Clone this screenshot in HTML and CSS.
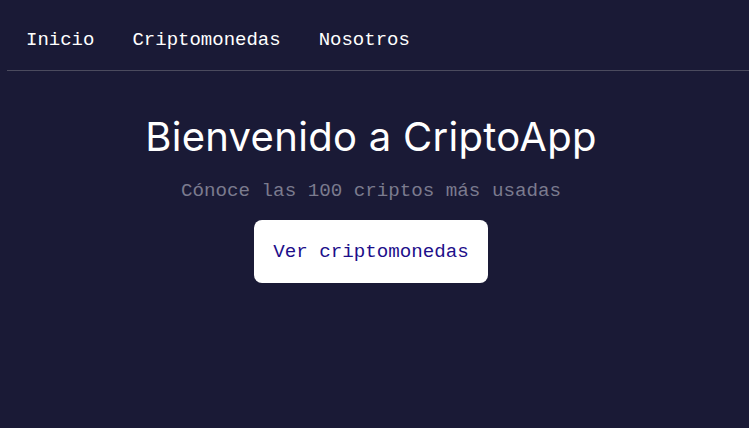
FILE: index.html
```html
<!DOCTYPE html>
<html lang="es">
<head>
<meta charset="utf-8">
<title>CriptoApp</title>
<link rel="stylesheet" href="styles.css">
</head>
<body>
<header class="header">
  <nav class="nav">
    <a class="nav-link" href="#">Inicio</a>
    <a class="nav-link" href="#">Criptomonedas</a>
    <a class="nav-link" href="#">Nosotros</a>
  </nav>
</header>
<main class="hero">
  <h1 class="hero-title">Bienvenido a CriptoApp</h1>
  <p class="hero-sub">Cónoce las 100 criptos más usadas</p>
  <a class="hero-btn" href="#">Ver criptomonedas</a>
</main>
</body>
</html>
```
FILE: styles.css
```css
html, body {
  margin: 0;
  padding: 0;
  background: #1a1a36;
  height: 100%;
}
body {
  font-family: "Liberation Mono", "DejaVu Sans Mono", monospace;
  color: #ffffff;
}
.header {
  margin-left: 7px;
  border-bottom: 1px solid #4b4b5e;
}
.nav {
  display: flex;
  gap: 38px;
  padding: 29px 0 19px 19px;
}
.nav-link {
  color: #ffffff;
  text-decoration: none;
  font-size: 19px;
  line-height: 22px;
}
.hero {
  display: flex;
  flex-direction: column;
  align-items: center;
  padding-right: 7px;
}
.hero-title {
  font-family: "Inter", "Open Sans", sans-serif;
  font-weight: 400;
  font-size: 40px;
  letter-spacing: 0.3px;
  line-height: 46px;
  margin: 43px 0 0;
}
.hero-sub {
  color: #7b7b8e;
  font-size: 19.2px;
  line-height: 22px;
  margin: 20px 0 0;
}
.hero-btn {
  margin-top: 18px;
  background: #ffffff;
  color: #1d0f8a;
  text-decoration: none;
  font-size: 19.2px;
  line-height: 22px;
  padding: 21px 19px 20px;
  border-radius: 8px;
}
```
